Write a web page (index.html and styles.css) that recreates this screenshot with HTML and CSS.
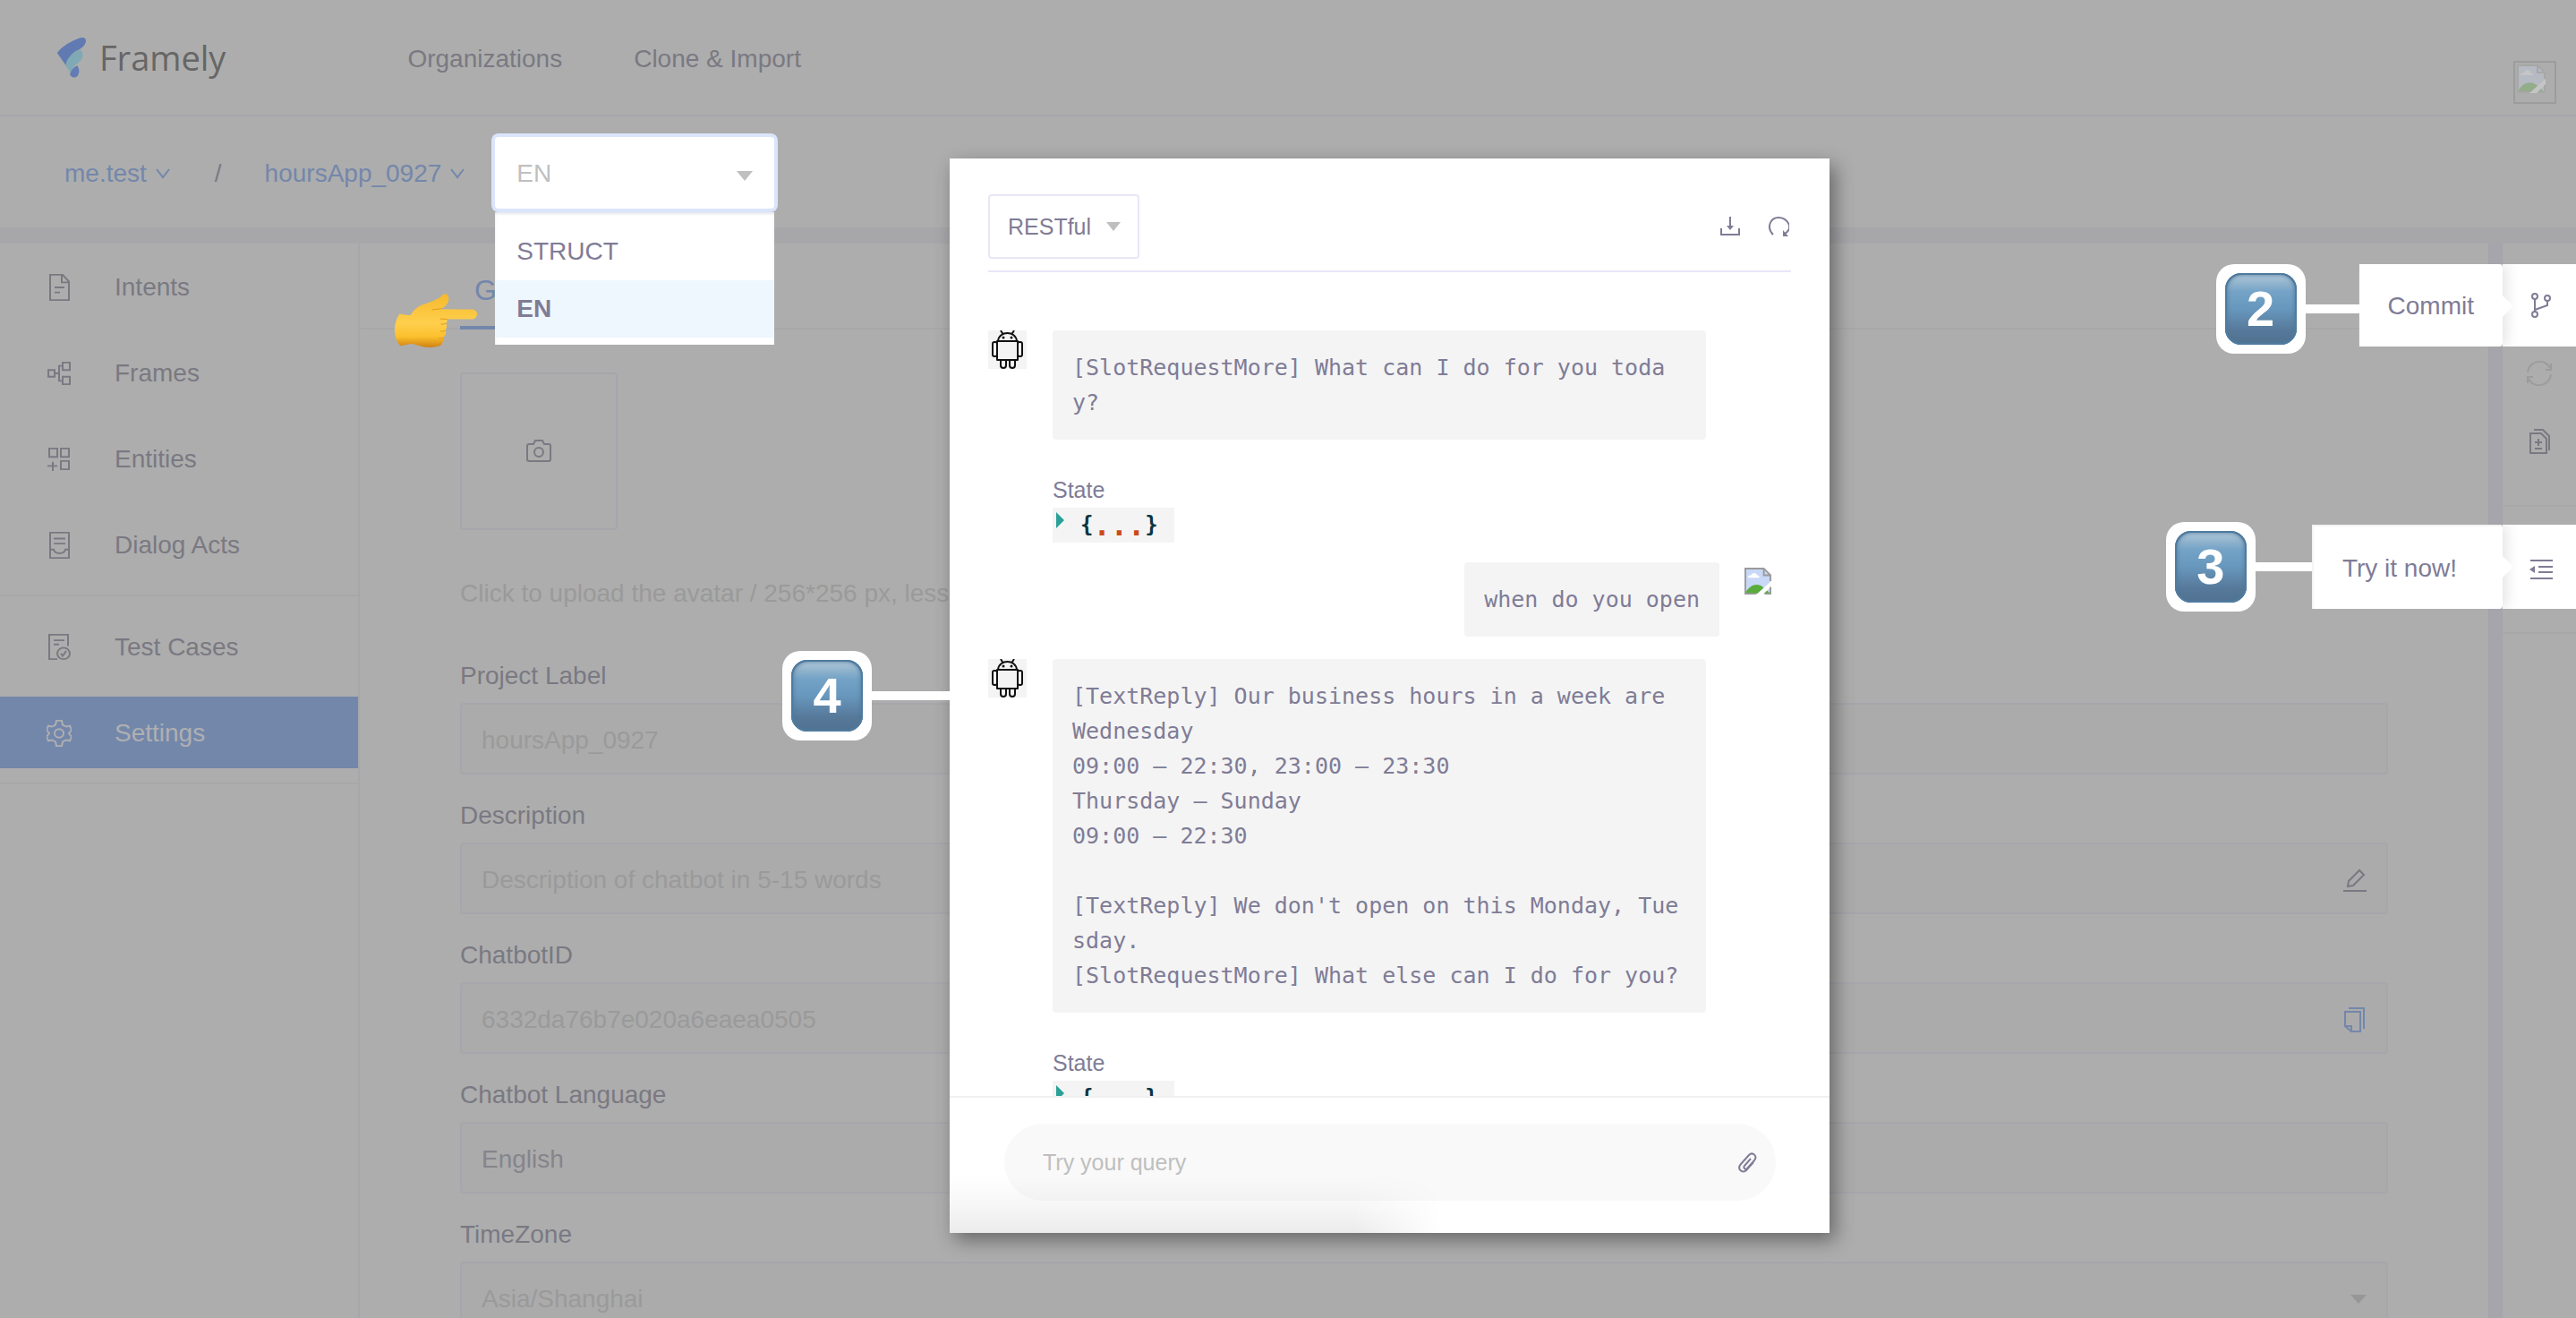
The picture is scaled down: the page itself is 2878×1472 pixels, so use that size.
FILE: index.html
```html
<!DOCTYPE html>
<html lang="en">
<head>
<meta charset="utf-8">
<title>Framely</title>
<link rel="stylesheet" href="styles.css">
</head>
<body>
<svg class="defs" aria-hidden="true">
  <symbol id="robot" viewBox="0 0 43 43">
    <rect width="43" height="43" fill="#f4f4f4" stroke="none"/>
    <g fill="none" stroke="#111" stroke-width="2" stroke-linejoin="round">
      <path d="M14 0l3 5M29 0l-3 5M11 12c1-12 20-12 21 0z"/>
      <path d="M10 12h23v21H10z"/>
      <rect x="5" y="13" width="5" height="16" rx="2"/><rect x="33" y="13" width="5" height="16" rx="2"/>
      <path d="M14 33v6c0 4 6 4 6 0v-6M24 33v6c0 4 6 4 6 0v-6"/>
    </g>
    <g fill="#111" stroke="none"><circle cx="17" cy="8" r="1.5"/><circle cx="26" cy="8" r="1.5"/></g>
  </symbol>
  <symbol id="broken" viewBox="0 0 32 32">
    <path class="b-sky" d="M1 1h22l8 8v22H1z"/>
    <path class="b-cloud" d="M4 12c0-3 3-3 4-3 1-4 7-3 7 0 3 0 3 3 3 3z"/>
    <path class="b-hill" d="M1 31c3-9 14-15 22-7l8 7z"/>
    <path class="b-tear" d="M14 32L32 16v6L22 32z"/>
    <path class="b-edge" d="M31 16V9l-8-8H1v30h13M23 1v8h8M31 23v8h-7"/>
  </symbol>
</svg>

<header class="topbar">
  <a class="logo" href="#">
    <svg width="34" height="46" viewBox="70 36 100 136">
      <path fill="#617ab2" d="M72 89Q98 57 148 40Q169 36 167 53Q163 72 130 86Q112 98 102 132Z"/>
      <path fill="#7fa9b4" d="M100 131Q106 94 150 78Q160 92 155 107Q149 118 130 131Q118 143 119 158Z"/>
      <path fill="#637db4" d="M117 153Q122 138 139 131Q150 150 140 165Q128 176 118 166Q112 160 117 153Z"/>
    </svg>
    <span>Framely</span>
  </a>
  <nav class="topnav"><a href="#">Organizations</a><a href="#">Clone &amp; Import</a></nav>
  <span class="profile"><svg class="broken dim" width="32" height="32"><use href="#broken"/></svg></span>
</header>

<div class="crumbs">
  <a href="#">me.test <svg width="16" height="12" viewBox="0 0 16 12"><path d="M1 1l7 9 7-9"/></svg></a>
  <span class="slash">/</span>
  <a href="#">hoursApp_0927 <svg width="16" height="12" viewBox="0 0 16 12"><path d="M1 1l7 9 7-9"/></svg></a>
  <div class="lang">
    <select class="lang-select" aria-label="Language"><option>EN</option></select>
    <svg class="caret" width="18" height="11" viewBox="0 0 18 11"><path d="M0 0h18l-9 11z"/></svg>
    <ul class="menu">
      <li><button>STRUCT</button></li>
      <li><button class="on">EN</button></li>
    </ul>
    <svg class="hand" width="94" height="61" viewBox="32 82 282 184">
      <defs><linearGradient id="skin" x1="0" y1="0" x2="0" y2="1"><stop offset="0" stop-color="#f6b92c"/><stop offset=".55" stop-color="#ffcf4d"/><stop offset=".8" stop-color="#fbc02d"/><stop offset="1" stop-color="#cf8112"/></linearGradient></defs>
      <path fill="url(#skin)" d="M50 150Q70 155 88 154Q100 132 122 121Q165 108 188 94Q196 82 207 83Q218 90 216 104Q212 122 190 134L298 135Q312 140 312 151Q310 164 298 168L212 168Q212 178 207 182Q213 194 205 205Q211 218 198 230Q199 250 186 258Q150 269 112 256Q98 250 88 251L55 258Q42 248 38 232Q26 190 50 150Z"/>
      <path fill="none" stroke="#e09a1c" stroke-width="3" d="M160 136Q178 134 192 132M212 168L188 167M207 182Q196 187 190 184M205 206Q194 212 188 208M198 231Q188 235 182 231"/>
    </svg>
  </div>
</div>

<div class="shell">
  <aside class="sidebar">
    <a href="#"><svg width="26" height="32" viewBox="0 0 26 34" preserveAspectRatio="none"><path d="M3 2h14l7 8v22H3zM16 2v9h8M8 17h11M8 23h6"/></svg>Intents</a>
    <a href="#"><svg width="26" height="26" viewBox="0 0 26 28" preserveAspectRatio="none"><path d="M1 10h7v8H1zM17 1h8v9h-8zM17 18h8v9h-8zM8 14h5M17 5h-4v18h4"/></svg>Frames</a>
    <a href="#"><svg width="26" height="26" viewBox="0 0 26 28" preserveAspectRatio="none"><path d="M2 1h9v10H2zM15 1h9v10h-9zM15 16h9v10h-9zM6 17v11M0 22h11"/></svg>Entities</a>
    <a href="#"><svg width="26" height="32" viewBox="0 0 26 34" preserveAspectRatio="none"><path d="M3 2h21v30H3zM7 9h13M7 15h13M3 22h4c1 6 12 6 13 0h4"/></svg>Dialog Acts</a>
    <hr>
    <a href="#"><svg width="26" height="31" viewBox="0 0 26 34" preserveAspectRatio="none"><path d="M11 32H2V2h21v14M7 9h12M7 14h6"/><circle cx="18" cy="25" r="7"/><path d="M15 25l2 3 4-6"/></svg>Test Cases</a>
    <a class="active" href="#"><svg width="28" height="32" viewBox="0 0 28 34" preserveAspectRatio="none"><path d="M11 2h6l1 5 4 2 4-1 2 5-3 4 3 4-2 5-4-1-4 2-1 5h-6l-1-5-4-2-4 1-2-5 3-4-3-4 2-5 4 1 4-2z"/><circle cx="14" cy="17" r="5"/></svg>Settings</a>
    <hr>
  </aside>

  <main class="main">
    <div class="tabs"><button class="tab">General</button></div>
    <form class="form">
      <button type="button" class="avatar" aria-label="Upload avatar"><svg width="28" height="26" viewBox="0 0 28 26"><path d="M3 5h5l2-4h8l2 4h5q2 0 2 2v15q0 2-2 2H3q-2 0-2-2V7q0-2 2-2z"/><circle cx="14" cy="14" r="5"/></svg></button>
      <p class="hint">Click to upload the avatar / 256*256 px, less than 2MB</p>
      <label for="f1">Project Label</label>
      <div class="field"><input id="f1" value="hoursApp_0927"></div>
      <label for="f2">Description</label>
      <div class="field"><input id="f2" placeholder="Description of chatbot in 5-15 words"><svg width="26" height="26" viewBox="0 0 26 26"><path d="M0 25h26M5 20l1-6L18 2l5 5-12 12z"/></svg></div>
      <label for="f3">ChatbotID</label>
      <div class="field"><input id="f3" value="6332da76b7e020a6eaea0505"><svg class="blue" width="26" height="28" viewBox="0 0 26 28"><path d="M6 1h17v23M2 5h17v22H9l-7-6zM2 21h7v6"/></svg></div>
      <label for="f4">Chatbot Language</label>
      <div class="field"><input id="f4" class="strong" value="English"></div>
      <label for="f5">TimeZone</label>
      <div class="field"><select id="f5"><option>Asia/Shanghai</option></select><svg class="solid" width="18" height="10" viewBox="0 0 18 10"><path d="M0 0h18l-9 10z"/></svg></div>
    </form>
  </main>

  <aside class="rail">
    <div class="slot">
      <div class="callout">
        <div class="step"><span class="plate"><b class="key">2</b></span><i class="wire"></i></div>
        <span class="tip">Commit</span>
        <button class="cell" aria-label="Commit"><svg width="24" height="28" viewBox="0 0 24 28"><g><circle cx="5" cy="4" r="3"/><circle cx="5" cy="24" r="3"/><circle cx="19" cy="6" r="3"/><path d="M5 7v14M19 9v5L5 19"/></g></svg></button>
      </div>
    </div>
    <button class="tool faint" aria-label="Sync"><svg width="28" height="28" viewBox="0 0 28 28"><path d="M1 13C2 0 20-4 26 8M27 15C26 28 8 32 2 20M27 3v7h-6M1 25v-7h6"/></svg></button>
    <button class="tool" aria-label="Diff"><svg width="24" height="28" viewBox="0 0 24 28"><path d="M2 5h12l6 6v16H2zM6 1h10l7 7v16M7 15h8M11 11v8M7 22h8"/></svg></button>
    <hr>
    <div class="slot try">
      <div class="callout">
        <div class="step"><span class="plate"><b class="key">3</b></span><i class="wire"></i></div>
        <span class="tip">Try it now!</span>
        <button class="cell" aria-label="Try it now"><svg width="26" height="24" viewBox="0 0 26 24"><path d="M1 2h25M10 9h16M10 15h16M1 22h25"/><path class="fill" d="M0 12l6-4v8z"/></svg></button>
      </div>
    </div>
    <hr>
  </aside>
</div>

<section class="chat">
  <div class="step chat-step"><span class="plate"><b class="key">4</b></span><i class="wire"></i></div>
  <header class="chat-head">
    <div class="mode">
      <select aria-label="Channel"><option>RESTful</option></select>
      <svg width="16" height="10" viewBox="0 0 16 10"><path fill="#bfbfbf" d="M0 0h16l-8 10z"/></svg>
    </div>
    <div class="actions">
      <button aria-label="Download"><svg width="24" height="24" viewBox="0 0 24 24"><path d="M2 14v7h20v-7M12 1v13"/><path class="fill" d="M8 11h8l-4 5z"/></svg></button>
      <button aria-label="Restart"><svg width="24" height="24" viewBox="0 0 24 24"><path d="M6 21C-2 13 3 2 12 2s18 11 7 18"/><path class="fill" d="M17 16v7h6z"/></svg></button>
    </div>
  </header>
  <div class="log">
    <div class="msg">
      <svg width="43" height="43"><use href="#robot"/></svg>
      <div class="col">
        <pre class="bubble">[SlotRequestMore] What can I do for you today?</pre>
        <span class="state-label">State</span>
        <button class="state"><svg width="9" height="18" viewBox="0 0 9 18"><path fill="#2aa198" d="M0 0l9 9-9 9z"/></svg><b>{</b><b class="dots">...</b><b>}</b></button>
      </div>
    </div>
    <div class="msg user">
      <pre class="bubble">when do you open</pre>
      <svg class="broken" width="30" height="30"><use href="#broken"/></svg>
    </div>
    <div class="msg">
      <svg width="43" height="43"><use href="#robot"/></svg>
      <div class="col">
        <pre class="bubble">[TextReply] Our business hours in a week are
Wednesday
09:00 – 22:30, 23:00 – 23:30
Thursday – Sunday
09:00 – 22:30

[TextReply] We don't open on this Monday, Tuesday.
[SlotRequestMore] What else can I do for you?</pre>
        <span class="state-label">State</span>
        <button class="state"><svg width="9" height="18" viewBox="0 0 9 18"><path fill="#2aa198" d="M0 0l9 9-9 9z"/></svg><b>{</b><b class="dots">...</b><b>}</b></button>
      </div>
    </div>
  </div>
  <footer class="chat-foot">
    <div class="query">
      <input aria-label="Query" placeholder="Try your query">
      <svg width="22" height="24" viewBox="0 0 22 24"><path d="M15 8l-7 8c-2 2 1 5 3 3l8-9c4-5-2-10-6-6l-9 10c-5 6 2 11 6 7l8-9"/></svg>
    </div>
  </footer>
</section>
</body>
</html>
```
FILE: styles.css
```css
:root {
  --bg: #adadad;
  --line: #a6a6ac;
  --ink: #7a7982;
  --blue: #7387ab;
  --faint: #9a9a9a;
  --violet: #7f7c96;
}
* { box-sizing: border-box; }
body {
  margin: 0;
  height: 100vh;
  overflow: hidden;
  display: flex;
  flex-direction: column;
  background: var(--bg);
  color: var(--ink);
  font: 28px/40px "Liberation Sans", Arial, sans-serif;
}
a { color: inherit; text-decoration: none; }
button, input, select {
  font: inherit;
  color: inherit;
  background: none;
  border: 0;
  padding: 0;
  appearance: none;
  outline: 0;
}
svg { fill: none; stroke: currentColor; stroke-width: 2; flex: none; }
hr { width: 100%; height: 2px; border: 0; margin: 0; background: #a8a8aa; }
.defs { position: absolute; width: 0; height: 0; }
.fill { fill: currentColor; stroke: none; }

.broken { stroke: none; }
.b-sky { fill: #c8d8f6; }
.b-cloud { fill: #fff; }
.b-hill { fill: #5aac3c; }
.b-tear { fill: #fff; }
.b-edge { fill: none; stroke: #9a9a9a; stroke-width: 2; }
.dim { opacity: .3; }

.topbar {
  display: flex;
  align-items: center;
  height: 130px;
  flex: none;
  padding: 0 22px 0 63px;
  border-bottom: 2px solid var(--line);
}
.logo {
  display: flex;
  align-items: center;
  gap: 14px;
  color: #666;
  font: 500 38px/44px "Open Sans", sans-serif;
}
.logo svg { stroke: none; }
.topnav { display: flex; gap: 80px; margin-left: 203px; padding-top: 4px; }
.profile {
  margin: 56px 0 0 auto;
  width: 48px;
  height: 48px;
  padding: 2px;
  border: 2px solid #9c9c9c;
  line-height: 0;
}

.crumbs {
  display: flex;
  align-items: center;
  flex: none;
  height: 142px;
  padding-left: 72px;
  border-bottom: 16px solid #a7a7aa;
  box-shadow: inset 0 -2px var(--line);
  color: var(--blue);
}
.crumbs > a { display: flex; align-items: center; gap: 10px; padding-top: 2px; }
.slash { margin: 0 48px 0 50px; padding-top: 2px; color: var(--ink); }
.lang {
  position: relative;
  display: flex;
  align-items: center;
  width: 312px;
  height: 80px;
  margin-left: 34px;
  background: #fff;
  border-radius: 4px;
  box-shadow: 0 0 0 4px #dae5fc;
  color: #bfbfbf;
}
.lang-select { width: 100%; height: 80px; padding: 2px 0 0 24px; }
.caret { position: absolute; right: 24px; top: 38px; fill: #bfbfbf; stroke: none; }
.menu {
  position: absolute;
  left: 0;
  top: 84px;
  width: 100%;
  margin: 0;
  padding: 12px 0 8px;
  list-style: none;
  background: #fff;
  box-shadow: inset 0 2px 3px #e4e6ec;
}
.menu button {
  display: block;
  width: 100%;
  height: 64px;
  padding-left: 24px;
  text-align: left;
  color: var(--violet);
}
.menu .on { background: #eef6fe; font-weight: bold; }
.hand { position: absolute; right: 331px; top: 175px; stroke: none; z-index: 2; }

.shell { display: flex; flex: 1; min-height: 0; }
.sidebar {
  display: flex;
  flex-direction: column;
  gap: 16px;
  width: 402px;
  padding-top: 8px;
  border-right: 2px solid var(--line);
}
.sidebar a {
  display: flex;
  align-items: center;
  gap: 49px;
  height: 80px;
  flex: none;
  padding: 1px 0 0 53px;
}
.sidebar hr { flex: none; }
.sidebar .active { background: var(--blue); color: #afafb1; gap: 48px; padding-left: 52px; }

.main { flex: 1; min-width: 0; overflow: hidden; }
.tabs { height: 96px; padding-left: 112px; border-bottom: 2px solid #a8a8aa; }
.tab {
  height: 96px;
  padding: 12px 16px 0;
  border-bottom: 4px solid var(--blue);
  color: var(--blue);
  font-size: 32px;
}
.form { display: flex; flex-direction: column; padding: 48px 112px 0; }
.avatar {
  display: flex;
  align-items: center;
  justify-content: center;
  width: 176px;
  height: 176px;
  border: 2px solid var(--line);
  border-radius: 4px;
}
.hint { margin: 51px 0; color: var(--faint); }
.form label { padding-top: 1px; margin-bottom: 10px; }
.field {
  display: flex;
  align-items: center;
  flex: none;
  height: 80px;
  margin-bottom: 25px;
  padding: 4px 22px 0;
  border: 2px solid var(--line);
  border-radius: 4px;
  background: #ababab;
}
.field input, .field select { flex: 1; color: var(--faint); opacity: 1; }
.field input::placeholder { color: var(--faint); }
.field .strong { color: #85848c; }
.blue { color: var(--blue); }
.solid { fill: #979797; stroke: none; }

.rail {
  display: flex;
  flex-direction: column;
  width: 98px;
  padding-top: 23px;
  border-left: 16px solid #a5a5ab;
  position: relative;
}
.rail hr { flex: none; }
.slot { position: relative; height: 92px; flex: none; }
.callout { position: absolute; right: 0; top: 0; display: flex; align-items: flex-start; }
.tool {
  display: flex;
  align-items: center;
  justify-content: center;
  height: 60px;
  margin-bottom: 16px;
}
.tool + hr { margin: 25px 0 20px; }
.faint { color: #9c9c9c; }
.try { height: 94px; margin-bottom: 26px; }
.try .callout { align-items: center; top: -3px; }
.step { display: flex; align-items: center; }
.plate {
  width: 100px;
  height: 100px;
  padding: 10px;
  border-radius: 20px;
  background: #fff;
}
.key {
  display: block;
  height: 80px;
  border-radius: 18px;
  background: linear-gradient(#b9cfe0, #92b4cd 14%, #74a3c7 26%, #6897bd 50%, #56799a 80%, #527290);
  box-shadow: inset 0 0 0 2px #4f7ba0, inset 0 0 5px 2px #4f7696;
  color: #fff;
  font: bold 56px/80px "Liberation Sans", Arial, sans-serif;
  text-align: center;
}
.wire { width: 60px; height: 10px; background: #fff; }
.try .wire { width: 63px; }
.tip {
  position: relative;
  z-index: 1;
  height: 92px;
  padding: 0 32px;
  background: #fff;
  border-radius: 0 4px 4px 0;
  box-shadow: 4px 0 16px #e2e2e2;
  clip-path: inset(0 -24px 0 0);
  line-height: 94px;
  color: var(--violet);
  white-space: nowrap;
}
.tip::after {
  content: "";
  position: absolute;
  right: -12px;
  top: 35px;
  border: solid transparent;
  border-width: 12px 0 12px 12px;
  border-left-color: #fff;
}
.try .tip { height: 94px; padding: 2px 51px 0 34px; box-shadow: inset 2px 2px #f4f4f6, 4px 0 16px #e2e2e2; }
.cell {
  display: flex;
  align-items: center;
  justify-content: center;
  width: 82px;
  height: 92px;
  padding-left: 4px;
  background: #fff;
  color: var(--violet);
}
.try .cell { height: 94px; padding-top: 6px; }

.chat {
  position: absolute;
  left: calc(50% - 378px);
  top: 177px;
  bottom: 95px;
  width: 983px;
  display: flex;
  flex-direction: column;
  background: #fff;
  color: var(--violet);
  font-size: 25px;
  box-shadow: 6px 8px 20px rgba(0, 0, 0, .4);
}
.chat-step { position: absolute; right: 100%; top: 550px; }
.chat-step .wire { width: 87px; }
.chat-head {
  display: flex;
  align-items: center;
  justify-content: space-between;
  flex: none;
  height: 127px;
  margin: 0 43px;
  padding: 40px 0 13px;
  border-bottom: 2px solid #e7e7f7;
}
.mode {
  display: flex;
  align-items: center;
  gap: 16px;
  width: 169px;
  height: 72px;
  padding-left: 20px;
  border: 2px solid #e7e7f7;
  border-radius: 4px;
}
.mode svg { stroke: none; }
.actions { display: flex; gap: 30px; padding-right: 2px; }
.actions button { line-height: 0; }
.log { flex: 1; min-height: 0; overflow: hidden; padding: 65px 43px 0; }
.msg { display: flex; gap: 29px; }
.user { justify-content: flex-end; margin: 22px 22px 25px 0; gap: 28px; }
.user svg { margin-top: 6px; }
.col { display: flex; flex-direction: column; align-items: flex-start; }
.bubble {
  max-width: 730px;
  margin: 0;
  padding: 22px;
  background: #f4f4f4;
  border-radius: 4px;
  font: 25px/39px "DejaVu Sans Mono", monospace;
  white-space: pre-wrap;
  word-break: break-all;
}
.col .bubble { width: 730px; }
.state-label { margin-top: 36px; }
.state {
  display: flex;
  align-items: center;
  width: 136px;
  height: 39px;
  padding-left: 4px;
  background: #f4f4f4;
  color: #073642;
  font: 24px/39px "DejaVu Sans Mono", monospace;
}
.state svg { stroke: none; margin: 0 18px 12px 0; }
.dots { color: #cb4b16; font-size: 32px; line-height: 32px; }
.chat-foot {
  position: relative;
  flex: none;
  padding: 29px 60px 36px 61px;
  border-top: 2px solid #f0f0f0;
}
.chat-foot::after {
  content: "";
  position: absolute;
  left: 0;
  bottom: 0;
  width: 56%;
  height: 64px;
  background: linear-gradient(to top, rgba(0, 0, 0, .08), rgba(0, 0, 0, .03) 50%, transparent);
  mask-image: linear-gradient(to right, #000 82%, transparent);
  pointer-events: none;
}
.query {
  display: flex;
  align-items: center;
  height: 86px;
  padding: 0 21px 0 43px;
  border-radius: 43px;
  background: #f9f9f9;
}
.query input { flex: 1; }
.query input::placeholder { color: #bfbfbf; opacity: 1; }
```
